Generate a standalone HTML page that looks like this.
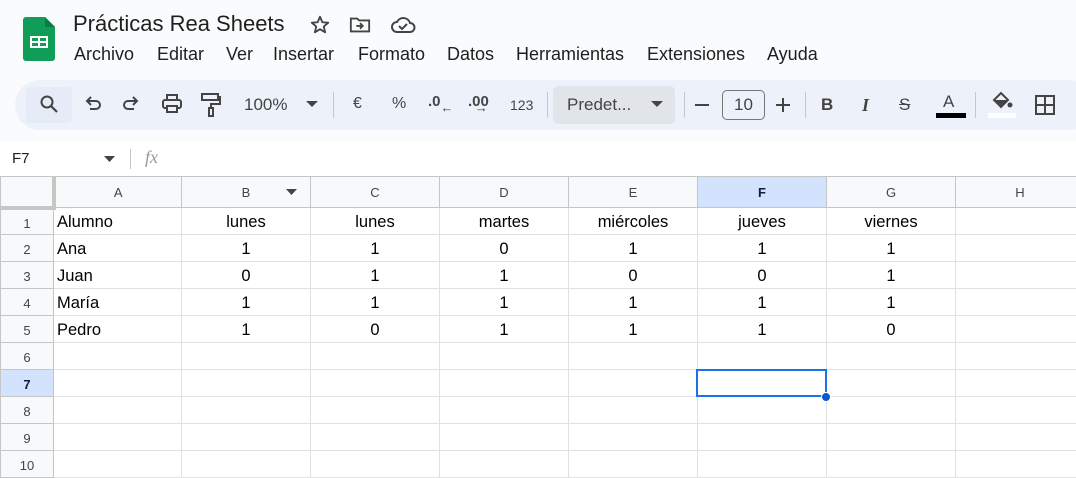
<!DOCTYPE html>
<html><head><meta charset="utf-8"><style>
*{margin:0;padding:0;box-sizing:border-box}
body{width:1076px;height:478px;overflow:hidden;background:#f9fbfd;font-family:"Liberation Sans",Arial,sans-serif;position:relative;color:#1f1f1f}
.a{position:absolute;white-space:nowrap}
.menu{top:44px;font-size:18px;color:#1f1f1f}
.tb{position:absolute;left:15px;top:80px;width:1080px;height:50px;background:#edf2fa;border-radius:25px}
.ic{position:absolute;top:94px}
.sep{position:absolute;top:92px;width:1px;height:26px;background:#c7c7c7}
table{position:absolute;left:0;top:176px;width:1084px;border-collapse:collapse;table-layout:fixed;background:#fff}
td{border:1px solid #e1e1e1;height:27px;font-size:16.5px;padding:3px 3px 0;color:#000;overflow:hidden;white-space:nowrap}
td.c{text-align:center}
tr.h td{height:31px;background:#f8f9fa;border-color:#c4c7c5;text-align:center;color:#444;font-size:13px;padding-top:0}
td.rh{background:#f8f9fa;border-color:#c4c7c5;text-align:center;color:#444;font-size:13px}
.sel{background:#d3e3fd !important;color:#0b1e44 !important;font-weight:bold}
</style></head><body>
<svg class="a" style="left:23px;top:17px" width="32" height="44" viewBox="0 0 32 44"><path d="M3 0h19l10 10v31a3 3 0 0 1-3 3H3a3 3 0 0 1-3-3V3a3 3 0 0 1 3-3z" fill="#0f9d58"/><path d="M22 0v10h10z" fill="#0b7a44"/><rect x="7" y="19" width="18" height="12" fill="#fff"/><rect x="9" y="21" width="6" height="3" fill="#0f9d58"/><rect x="17" y="21" width="6" height="3" fill="#0f9d58"/><rect x="9" y="26" width="6" height="3" fill="#0f9d58"/><rect x="17" y="26" width="6" height="3" fill="#0f9d58"/></svg>
<div class="a" style="left:73px;top:11px;font-size:22px">Prácticas Rea Sheets</div>
<svg class="a" style="left:309px;top:14px" width="22" height="22" viewBox="0 0 24 24"><path d="M12 3l2.6 6 6.4.5-4.9 4.2 1.5 6.3L12 16.6 6.4 20l1.5-6.3L3 9.5 9.4 9z" fill="none" stroke="#444" stroke-width="2" stroke-linejoin="round"/></svg>
<svg class="a" style="left:349px;top:15px" width="22" height="20" viewBox="0 0 24 20"><path d="M2 3h7l2 2h11v12H2z" fill="none" stroke="#444" stroke-width="2"/><path d="M8 11h7M12 8l3 3-3 3" fill="none" stroke="#444" stroke-width="2"/></svg>
<svg class="a" style="left:390px;top:14px" width="26" height="22" viewBox="0 0 26 22"><path d="M7 18a5 5 0 0 1 0-10 7 7 0 0 1 13 1 4.5 4.5 0 0 1 0 9z" fill="none" stroke="#444" stroke-width="2"/><path d="M9 12l3 3 5-5" fill="none" stroke="#444" stroke-width="2"/></svg>
<div class="a menu" style="left:74px">Archivo</div>
<div class="a menu" style="left:157px">Editar</div>
<div class="a menu" style="left:226px">Ver</div>
<div class="a menu" style="left:273px">Insertar</div>
<div class="a menu" style="left:358px">Formato</div>
<div class="a menu" style="left:447px">Datos</div>
<div class="a menu" style="left:516px">Herramientas</div>
<div class="a menu" style="left:647px">Extensiones</div>
<div class="a menu" style="left:767px">Ayuda</div>
<div class="tb"></div>
<div class="a" style="left:26px;top:87px;width:46px;height:36px;background:#e6ecf7;border-radius:4px"></div>
<svg class="ic a" style="left:39px" width="20" height="20" viewBox="0 0 20 20"><circle cx="8" cy="8" r="5.5" fill="none" stroke="#444" stroke-width="2"/><path d="M12 12l6 6" stroke="#444" stroke-width="2.2"/></svg>
<svg class="ic a" style="left:83px" width="20" height="20" viewBox="0 0 20 20"><path d="M5 7h8a4 4 0 0 1 0 8H7" fill="none" stroke="#444" stroke-width="2"/><path d="M8 3L4 7l4 4" fill="none" stroke="#444" stroke-width="2"/></svg>
<svg class="ic a" style="left:121px" width="20" height="20" viewBox="0 0 20 20"><path d="M15 7H7a4 4 0 0 0 0 8h6" fill="none" stroke="#444" stroke-width="2"/><path d="M12 3l4 4-4 4" fill="none" stroke="#444" stroke-width="2"/></svg>
<svg class="ic a" style="left:161px" width="22" height="20" viewBox="0 0 22 20"><rect x="6" y="1" width="10" height="5" fill="none" stroke="#444" stroke-width="2"/><rect x="2" y="6" width="18" height="8" rx="2" fill="none" stroke="#444" stroke-width="2"/><rect x="6" y="12" width="10" height="6" fill="#edf2fa" stroke="#444" stroke-width="2"/></svg>
<svg class="ic a" style="left:200px;top:92px" width="22" height="26" viewBox="0 0 22 26"><rect x="2" y="2" width="16" height="6" fill="none" stroke="#444" stroke-width="2"/><path d="M18 5h2v7H11v4" fill="none" stroke="#444" stroke-width="2"/><rect x="9" y="16" width="4" height="8" fill="none" stroke="#444" stroke-width="2"/></svg>
<div class="a" style="left:244px;top:95px;font-size:17px;color:#444">100%</div>
<svg class="a" style="left:306px;top:101px" width="12" height="7"><path d="M0 0h12L6 6z" fill="#444"/></svg>
<div class="sep" style="left:333px"></div>
<div class="a" style="left:353px;top:95px;font-size:16px;color:#444">€</div>
<div class="a" style="left:392px;top:95px;font-size:16px;color:#444">%</div>
<div class="a" style="left:428px;top:93px;font-size:15px;font-weight:bold;color:#444">.0<span style="font-size:13px;position:relative;top:6px">←</span></div>
<div class="a" style="left:468px;top:93px;font-size:15px;font-weight:bold;color:#444">.00<span style="font-size:13px;position:relative;top:6px;left:-14px">→</span></div>
<div class="a" style="left:510px;top:97px;font-size:14px;color:#444">123</div>
<div class="sep" style="left:547px"></div>
<div class="a" style="left:553px;top:86px;width:122px;height:38px;background:#e1e5ea;border-radius:5px"></div>
<div class="a" style="left:567px;top:95px;font-size:17px;color:#444">Predet...</div>
<svg class="a" style="left:651px;top:101px" width="12" height="7"><path d="M0 0h12L6 6z" fill="#444"/></svg>
<div class="sep" style="left:684px"></div>
<div class="a" style="left:695px;top:104px;width:14px;height:2px;background:#444"></div>
<div class="a" style="left:722px;top:90px;width:43px;height:30px;border:1px solid #747775;border-radius:5px;font-size:17px;color:#444;text-align:center;line-height:28px">10</div>
<div class="a" style="left:776px;top:104px;width:14px;height:2px;background:#444"></div>
<div class="a" style="left:782px;top:98px;width:2px;height:14px;background:#444"></div>
<div class="sep" style="left:805px"></div>
<div class="a" style="left:821px;top:95px;font-size:17px;font-weight:bold;color:#444">B</div>
<div class="a" style="left:862px;top:95px;font-size:18px;font-style:italic;font-weight:bold;color:#444;font-family:'Liberation Serif',serif">I</div>
<div class="a" style="left:899px;top:95px;font-size:17px;color:#444;text-decoration:line-through">S</div>
<div class="a" style="left:943px;top:92px;font-size:17px;color:#444">A</div>
<div class="a" style="left:936px;top:113px;width:30px;height:5px;background:#000"></div>
<div class="sep" style="left:975px"></div>
<svg class="a" style="left:990px;top:91px" width="24" height="20" viewBox="0 0 24 20"><path d="M4 9l7-7 7 7-7 7z" fill="none" stroke="#444" stroke-width="2"/><path d="M4 9h14l-7 7z" fill="#444"/><circle cx="20" cy="14" r="2.5" fill="#444"/></svg>
<div class="a" style="left:988px;top:113px;width:28px;height:5px;background:#fff"></div>
<svg class="a" style="left:1035px;top:95px" width="20" height="20" viewBox="0 0 20 20"><rect x="1" y="1" width="18" height="18" fill="none" stroke="#444" stroke-width="2"/><path d="M10 1v18M1 10h18" stroke="#444" stroke-width="2"/></svg>
<div class="a" style="left:0;top:141px;width:1076px;height:36px;background:#fff"></div>
<div class="a" style="left:12px;top:150px;font-size:15px;color:#1f1f1f">F7</div>
<svg class="a" style="left:104px;top:156px" width="11" height="6"><path d="M0 0h11L5.5 6z" fill="#444"/></svg>
<div class="a" style="left:130px;top:149px;width:1px;height:20px;background:#c7c7c7"></div>
<div class="a" style="left:145px;top:147px;font-size:18px;font-style:italic;color:#999;font-family:'Liberation Serif',serif">fx</div>
<table>
<colgroup><col style="width:53px"><col style="width:128px"><col style="width:129px"><col style="width:129px"><col style="width:129px"><col style="width:129px"><col style="width:129px"><col style="width:129px"><col style="width:129px"></colgroup>
<tr class="h"><td style="border-right:4px solid #c4c7c5;border-bottom:4px solid #c4c7c5"></td><td>A</td><td>B</td><td>C</td><td>D</td><td>E</td><td class="sel">F</td><td>G</td><td>H</td></tr>
<tr><td class="rh">1</td><td>Alumno</td><td class="c">lunes</td><td class="c">lunes</td><td class="c">martes</td><td class="c">miércoles</td><td class="c">jueves</td><td class="c">viernes</td><td></td></tr>
<tr><td class="rh">2</td><td>Ana</td><td class="c">1</td><td class="c">1</td><td class="c">0</td><td class="c">1</td><td class="c">1</td><td class="c">1</td><td></td></tr>
<tr><td class="rh">3</td><td>Juan</td><td class="c">0</td><td class="c">1</td><td class="c">1</td><td class="c">0</td><td class="c">0</td><td class="c">1</td><td></td></tr>
<tr><td class="rh">4</td><td>María</td><td class="c">1</td><td class="c">1</td><td class="c">1</td><td class="c">1</td><td class="c">1</td><td class="c">1</td><td></td></tr>
<tr><td class="rh">5</td><td>Pedro</td><td class="c">1</td><td class="c">0</td><td class="c">1</td><td class="c">1</td><td class="c">1</td><td class="c">0</td><td></td></tr>
<tr><td class="rh">6</td><td></td><td></td><td></td><td></td><td></td><td></td><td></td><td></td></tr>
<tr><td class="rh sel">7</td><td></td><td></td><td></td><td></td><td></td><td></td><td></td><td></td></tr>
<tr><td class="rh">8</td><td></td><td></td><td></td><td></td><td></td><td></td><td></td><td></td></tr>
<tr><td class="rh">9</td><td></td><td></td><td></td><td></td><td></td><td></td><td></td><td></td></tr>
<tr><td class="rh">10</td><td></td><td></td><td></td><td></td><td></td><td></td><td></td><td></td></tr>
</table>
<svg class="a" style="left:286px;top:189px" width="11" height="6"><path d="M0 0h11L5.5 6z" fill="#444"/></svg>
<div class="a" style="left:696px;top:369px;width:131px;height:28px;border:2px solid #1a73e8"></div>
<div class="a" style="left:821px;top:392px;width:10px;height:10px;border-radius:50%;background:#0b57d0;border:1px solid #fff"></div>
</body></html>
